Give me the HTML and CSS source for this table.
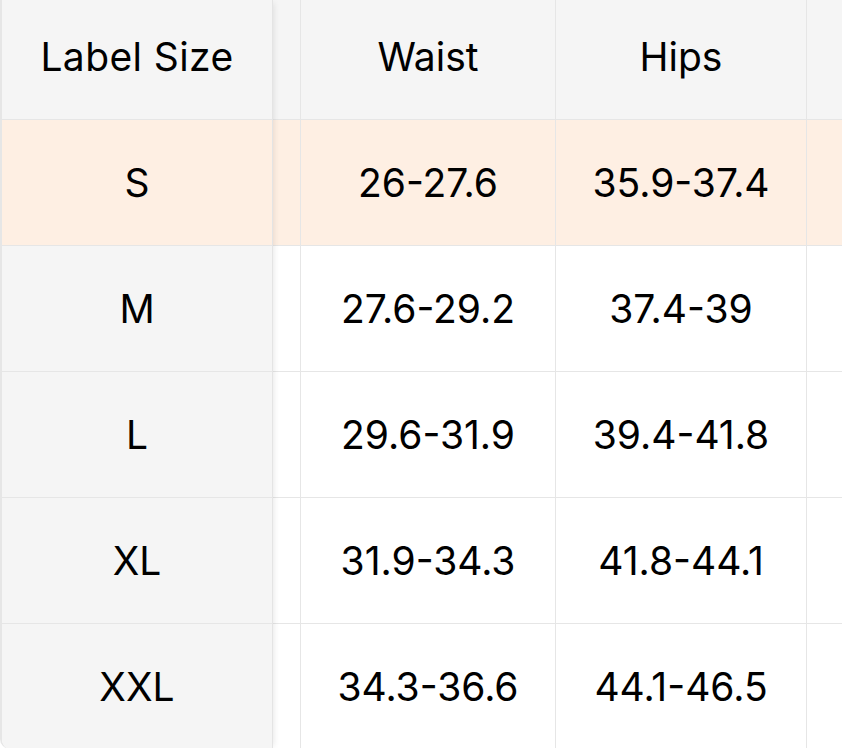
FILE: index.html
```html
<!DOCTYPE html>
<html>
<head>
<meta charset="utf-8">
<link rel="stylesheet" href="styles.css">
</head>
<body>
<div class="table">
  <div class="frozen">
    <div class="cell head">Label Size</div>
    <div class="cell hl">S</div>
    <div class="cell">M</div>
    <div class="cell">L</div>
    <div class="cell">XL</div>
    <div class="cell last">XXL</div>
  </div>
  <div class="scroll">
    <div class="row head">
      <div class="cell strip"></div>
      <div class="cell waist">Waist</div>
      <div class="cell hips">Hips</div>
      <div class="cell rest"></div>
    </div>
    <div class="row hl">
      <div class="cell strip"></div>
      <div class="cell waist">26-27.6</div>
      <div class="cell hips">35.9-37.4</div>
      <div class="cell rest"></div>
    </div>
    <div class="row">
      <div class="cell strip"></div>
      <div class="cell waist">27.6-29.2</div>
      <div class="cell hips">37.4-39</div>
      <div class="cell rest"></div>
    </div>
    <div class="row">
      <div class="cell strip"></div>
      <div class="cell waist">29.6-31.9</div>
      <div class="cell hips">39.4-41.8</div>
      <div class="cell rest"></div>
    </div>
    <div class="row">
      <div class="cell strip"></div>
      <div class="cell waist">31.9-34.3</div>
      <div class="cell hips">41.8-44.1</div>
      <div class="cell rest"></div>
    </div>
    <div class="row last">
      <div class="cell strip"></div>
      <div class="cell waist">34.3-36.6</div>
      <div class="cell hips">44.1-46.5</div>
      <div class="cell rest"></div>
    </div>
  </div>
</div>
</body>
</html>
```

FILE: styles.css
```css
html, body {
  margin: 0;
  padding: 0;
  background: #ffffff;
}
body {
  font-family: Inter, "Liberation Sans", sans-serif;
  color: #000000;
  width: 842px;
  height: 748px;
  overflow: hidden;
}
.table {
  display: flex;
  width: 860px;
  height: 749px;
  border-left: 2px solid #e6e6e6;
  border-bottom-left-radius: 10px;
  overflow: hidden;
  box-sizing: border-box;
}
.frozen {
  width: 270px;
  flex: none;
  display: flex;
  flex-direction: column;
  background: #f5f5f5;
  border-right: 1px solid #e4e4e4;
  box-shadow: 4px 0 6px -3px rgba(0, 0, 0, 0.09);
  position: relative;
  z-index: 1;
}
.scroll {
  flex: 1;
  display: flex;
  flex-direction: column;
}
.row {
  display: flex;
  height: 126px;
  flex: none;
}
.row.head {
  height: 120px;
  background: #f5f5f5;
}
.row.hl {
  background: #feefe3;
}
.row.last {
  height: 125px;
}
.cell {
  box-sizing: border-box;
  display: flex;
  align-items: center;
  justify-content: center;
  font-size: 39px;
  font-weight: 420;
  border-bottom: 1px solid #e6e6e6;
  height: 126px;
  flex: none;
}
.frozen .cell.head {
  letter-spacing: 0.4px;
}
.frozen .cell.head,
.row.head .cell {
  height: 120px;
  padding-bottom: 6px;
}
.frozen .cell.hl {
  background: #feefe3;
}
.frozen .cell.last {
  height: 125px;
  border-bottom: none;
}
.row.last .cell {
  border-bottom: none;
  height: 125px;
}
.row .cell {
  border-right: 1px solid #e6e6e6;
}
.strip {
  width: 28px;
}
.waist {
  width: 255px;
}
.hips {
  width: 251px;
}
.rest {
  width: 60px;
}
```
